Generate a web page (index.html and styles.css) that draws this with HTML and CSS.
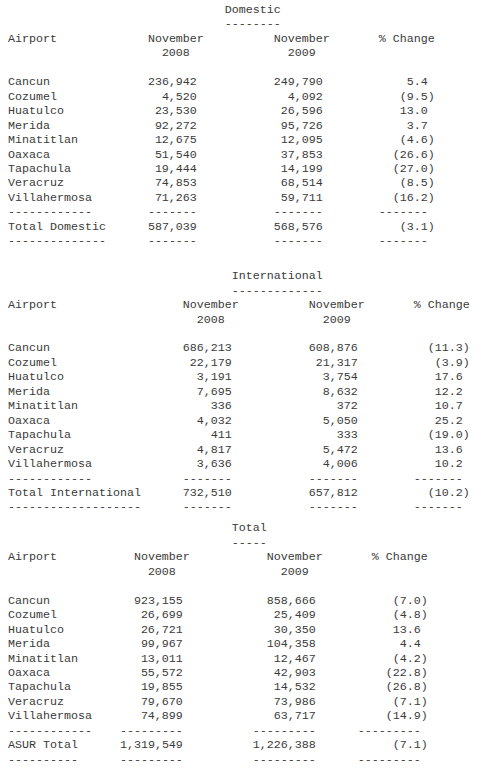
FILE: index.html
```html
<!DOCTYPE html>
<html>
<head>
<meta charset="utf-8">
<link rel="stylesheet" href="styles.css">
</head>
<body>
<section class="tbl dom">
  <div class="title">Domestic</div>
  <div class="title">--------</div>
  <div>Airport</div><div class="hd">November<br>2008</div><div class="hd">November<br>2009</div><div class="chg">% Change</div>
  <div class="blank"></div>
  <div>Cancun</div><div class="n">236,942</div><div class="n">249,790</div><div class="n">5.4</div>
  <div>Cozumel</div><div class="n">4,520</div><div class="n">4,092</div><div class="neg">(9.5)</div>
  <div>Huatulco</div><div class="n">23,530</div><div class="n">26,596</div><div class="n">13.0</div>
  <div>Merida</div><div class="n">92,272</div><div class="n">95,726</div><div class="n">3.7</div>
  <div>Minatitlan</div><div class="n">12,675</div><div class="n">12,095</div><div class="neg">(4.6)</div>
  <div>Oaxaca</div><div class="n">51,540</div><div class="n">37,853</div><div class="neg">(26.6)</div>
  <div>Tapachula</div><div class="n">19,444</div><div class="n">14,199</div><div class="neg">(27.0)</div>
  <div>Veracruz</div><div class="n">74,853</div><div class="n">68,514</div><div class="neg">(8.5)</div>
  <div>Villahermosa</div><div class="n">71,263</div><div class="n">59,711</div><div class="neg">(16.2)</div>
  <div>------------</div><div class="n">-------</div><div class="n">-------</div><div class="n">-------</div>
  <div>Total Domestic</div><div class="n">587,039</div><div class="n">568,576</div><div class="neg">(3.1)</div>
  <div>--------------</div><div class="n">-------</div><div class="n">-------</div><div class="n">-------</div>
</section>
<section class="tbl intl">
  <div class="title">International</div>
  <div class="title">-------------</div>
  <div>Airport</div><div class="hd">November<br>2008</div><div class="hd">November<br>2009</div><div class="chg">% Change</div>
  <div class="blank"></div>
  <div>Cancun</div><div class="n">686,213</div><div class="n">608,876</div><div class="neg">(11.3)</div>
  <div>Cozumel</div><div class="n">22,179</div><div class="n">21,317</div><div class="neg">(3.9)</div>
  <div>Huatulco</div><div class="n">3,191</div><div class="n">3,754</div><div class="n">17.6</div>
  <div>Merida</div><div class="n">7,695</div><div class="n">8,632</div><div class="n">12.2</div>
  <div>Minatitlan</div><div class="n">336</div><div class="n">372</div><div class="n">10.7</div>
  <div>Oaxaca</div><div class="n">4,032</div><div class="n">5,050</div><div class="n">25.2</div>
  <div>Tapachula</div><div class="n">411</div><div class="n">333</div><div class="neg">(19.0)</div>
  <div>Veracruz</div><div class="n">4,817</div><div class="n">5,472</div><div class="n">13.6</div>
  <div>Villahermosa</div><div class="n">3,636</div><div class="n">4,006</div><div class="n">10.2</div>
  <div>------------</div><div class="n">-------</div><div class="n">-------</div><div class="n">-------</div>
  <div>Total International</div><div class="n">732,510</div><div class="n">657,812</div><div class="neg">(10.2)</div>
  <div>-------------------</div><div class="n">-------</div><div class="n">-------</div><div class="n">-------</div>
</section>
<section class="tbl total">
  <div class="title">Total</div>
  <div class="title">-----</div>
  <div>Airport</div><div class="hd">November<br>2008</div><div class="hd">November<br>2009</div><div class="chg">% Change</div>
  <div class="blank"></div>
  <div>Cancun</div><div class="n">923,155</div><div class="n">858,666</div><div class="neg">(7.0)</div>
  <div>Cozumel</div><div class="n">26,699</div><div class="n">25,409</div><div class="neg">(4.8)</div>
  <div>Huatulco</div><div class="n">26,721</div><div class="n">30,350</div><div class="n">13.6</div>
  <div>Merida</div><div class="n">99,967</div><div class="n">104,358</div><div class="n">4.4</div>
  <div>Minatitlan</div><div class="n">13,011</div><div class="n">12,467</div><div class="neg">(4.2)</div>
  <div>Oaxaca</div><div class="n">55,572</div><div class="n">42,903</div><div class="neg">(22.8)</div>
  <div>Tapachula</div><div class="n">19,855</div><div class="n">14,532</div><div class="neg">(26.8)</div>
  <div>Veracruz</div><div class="n">79,670</div><div class="n">73,986</div><div class="neg">(7.1)</div>
  <div>Villahermosa</div><div class="n">74,899</div><div class="n">63,717</div><div class="neg">(14.9)</div>
  <div>------------</div><div class="n">---------</div><div class="n">---------</div><div class="n">---------</div>
  <div>ASUR Total</div><div class="n">1,319,549</div><div class="n">1,226,388</div><div class="neg">(7.1)</div>
  <div>----------</div><div class="n">---------</div><div class="n">---------</div><div class="n">---------</div>
</section>
</body>
</html>
```
FILE: styles.css
```css
:root {
  --lh: 14.45px;
}
html, body {
  background: #ffffff;
}
body {
  margin: 3px 8px 0 8px;
  font-family: "Liberation Mono", "Courier New", monospace;
  font-size: 11.665px;
  line-height: var(--lh);
  color: #3a3a3a;
}
.tbl {
  display: grid;
  white-space: pre;
  margin-bottom: 6.55px;
}
.tbl.dom {
  grid-template-columns: 20ch 8ch 18ch 15ch;
  margin-bottom: calc(var(--lh) + 6.1px);
}
.tbl.intl {
  grid-template-columns: 25ch 8ch 18ch 15ch;
}
.tbl.total {
  grid-template-columns: 16ch 10ch 19ch 15ch;
}
.title {
  grid-column: 1 / -1;
}
.dom .title { padding-left: 31ch; }
.intl .title { padding-left: 32ch; }
.total .title { padding-left: 32ch; }
.hd {
  justify-self: end;
  width: 8ch;
  text-align: center;
}
.chg {
  text-align: right;
}
.blank {
  grid-column: 1 / -1;
  height: var(--lh);
}
.n {
  text-align: right;
  padding-right: 1ch;
}
.neg {
  text-align: right;
}
```
